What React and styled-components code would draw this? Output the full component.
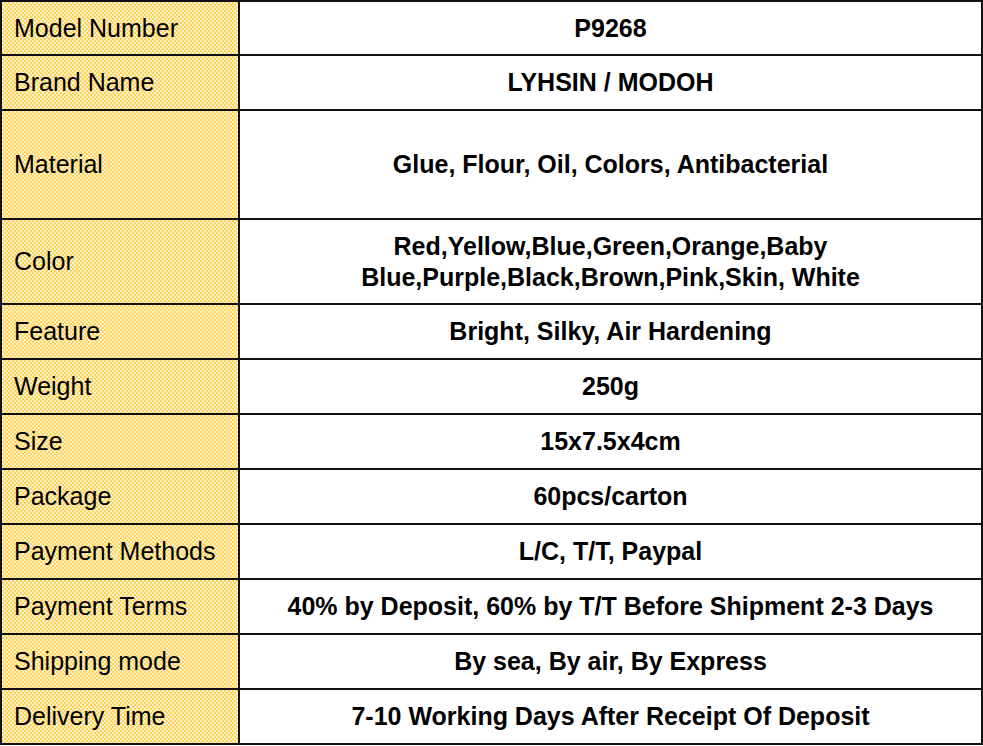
import React from "react";
import styled, { createGlobalStyle } from "styled-components";

const rows = [
  { label: "Model Number", value: "P9268", height: 52 },
  { label: "Brand Name", value: "LYHSIN / MODOH", height: 53 },
  { label: "Material", value: "Glue, Flour, Oil, Colors, Antibacterial", height: 107 },
  {
    label: "Color",
    value: ["Red,Yellow,Blue,Green,Orange,Baby", "Blue,Purple,Black,Brown,Pink,Skin, White"],
    height: 83
  },
  { label: "Feature", value: "Bright, Silky, Air Hardening", height: 53 },
  { label: "Weight", value: "250g", height: 53 },
  { label: "Size", value: "15x7.5x4cm", height: 53 },
  { label: "Package", value: "60pcs/carton", height: 53 },
  { label: "Payment Methods", value: "L/C, T/T, Paypal", height: 53 },
  { label: "Payment Terms", value: "40% by Deposit, 60% by T/T Before Shipment 2-3 Days", height: 53 },
  { label: "Shipping mode", value: "By sea, By air, By Express", height: 53 },
  { label: "Delivery Time", value: "7-10 Working Days After Receipt Of Deposit", height: 53 }
];

export default function App() {
  return (
    <>
      <GlobalStyle />
      <SpecTable rows={rows.map(r => `${r.height}px`).join(" ")}>
        {rows.map(r => (
          <React.Fragment key={r.label}>
            <LabelCell>{r.label}</LabelCell>
            <ValueCell>
              {Array.isArray(r.value)
                ? r.value.map(line => <Line key={line}>{line}</Line>)
                : r.value}
            </ValueCell>
          </React.Fragment>
        ))}
      </SpecTable>
    </>
  );
}

const GlobalStyle = createGlobalStyle`
  body {
    margin: 0;
    background: #ffffff;
    font-family: "Liberation Sans", Arial, sans-serif;
  }
`;

const SpecTable = styled.div`
  display: grid;
  grid-template-columns: 236px 741px;
  grid-template-rows: ${p => p.rows};
  gap: 2px;
  padding: 2px;
  width: 983px;
  box-sizing: border-box;
  background: #111111;
`;

const LabelCell = styled.div`
  display: flex;
  align-items: center;
  padding-left: 12px;
  font-size: 25px;
  color: #000000;
  background-color: #fcdf8a;
  background-image: repeating-conic-gradient(#fad45e 0 25%, #fff1c4 0 50%);
  background-size: 4px 4px;
`;

const ValueCell = styled.div`
  display: flex;
  flex-direction: column;
  align-items: center;
  justify-content: center;
  background: #ffffff;
  font-size: 25px;
  font-weight: bold;
  color: #000000;
  line-height: 31px;
  text-align: center;
`;

const Line = styled.div`
  white-space: nowrap;
`;
